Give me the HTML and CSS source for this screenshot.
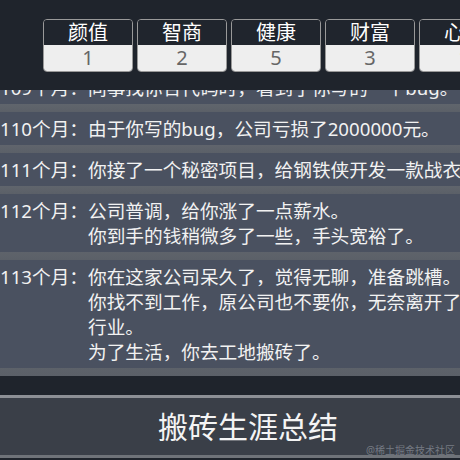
FILE: index.html
```html
<html>
  <head>
    <meta charset="utf-8" />
    <meta name="viewport" content="width=device-width, initial-scale=1.0" />
    <title>搬砖人生</title>
    <link rel="stylesheet" href="styles.css">
  </head>
  <body>
    <div class="page">
      <div class="top">
        <div class="stats">
          <div class="stat"><div class="name">颜值</div><div class="val">1</div></div>
          <div class="stat"><div class="name">智商</div><div class="val">2</div></div>
          <div class="stat"><div class="name">健康</div><div class="val">5</div></div>
          <div class="stat"><div class="name">财富</div><div class="val">3</div></div>
          <div class="stat"><div class="name">心态</div><div class="val">1</div></div>
        </div>
      </div>
      <div class="log">
        <ul>
          <li>
            <span class="month">109个月：</span>
            <div class="text">同事找你合代码时，看到了你写的一个bug。</div>
          </li>
          <li>
            <span class="month">110个月：</span>
            <div class="text">由于你写的bug，公司亏损了2000000元。</div>
          </li>
          <li>
            <span class="month">111个月：</span>
            <div class="text">你接了一个秘密项目，给钢铁侠开发一款战衣。</div>
          </li>
          <li>
            <span class="month">112个月：</span>
            <div class="text">公司普调，给你涨了一点薪水。<br>你到手的钱稍微多了一些，手头宽裕了。</div>
          </li>
          <li>
            <span class="month">113个月：</span>
            <div class="text">你在这家公司呆久了，觉得无聊，准备跳槽。<br>你找不到工作，原公司也不要你，无奈离开了程序开发行业。<br>为了生活，你去工地搬砖了。</div>
          </li>
        </ul>
      </div>
      <div class="summary">搬砖生涯总结</div>
    </div>
    <div class="mark">@稀土掘金技术社区</div>
  </body>
</html>
```

FILE: styles.css
```css
* {
  margin: 0;
  padding: 0;
  box-sizing: border-box;
}
html,
body {
  background: #1f242c;
}
body {
  position: relative;
  width: 460px;
  height: 460px;
  overflow: hidden;
  font-family: "Noto Sans", "Noto Sans CJK SC", sans-serif;
}
.page {
  width: 552px;
}
.top {
  height: 90px;
  padding: 19px 0 0 43px;
}
.stats {
  display: flex;
  gap: 4px;
}
.stat {
  flex: none;
  width: 90px;
  border: 1px solid #999;
  border-radius: 4px;
  overflow: hidden;
  text-align: center;
  font-size: 20px;
}
.stat .name {
  height: 25px;
  line-height: 25px;
  color: #fff;
  background: #20252d;
}
.stat .val {
  height: 26px;
  line-height: 26px;
  color: #666;
  background: #eee;
}
.log {
  height: 286px;
  overflow: hidden;
}
.log ul {
  list-style: none;
  margin-top: -19px;
}
.log li {
  display: flex;
  padding: 4px 0;
  background: #4a5160;
  color: #f2f2f2;
  font-size: 18.67px;
  line-height: 25px;
  border-bottom: 8px solid #777;
  border-image: linear-gradient(#5b6068, #8e9094 25%, #6b6f76 50%, #8e9094 75%, #5b6068) 1;
}
.log .month {
  flex: none;
  width: 88px;
  white-space: nowrap;
}
.log .text {
  width: 456px;
}
.summary {
  margin-top: 19px;
  height: 63px;
  padding-right: 56px;
  border-top: 3px solid #8c8f95;
  border-bottom: 3px solid #6f7379;
  background: #3a3f48;
  color: #f4f4f4;
  font-size: 30px;
  line-height: 57px;
  text-align: center;
}
.mark {
  position: absolute;
  right: 5px;
  bottom: 3px;
  font-size: 10px;
  color: rgba(190, 195, 205, 0.45);
}
```
